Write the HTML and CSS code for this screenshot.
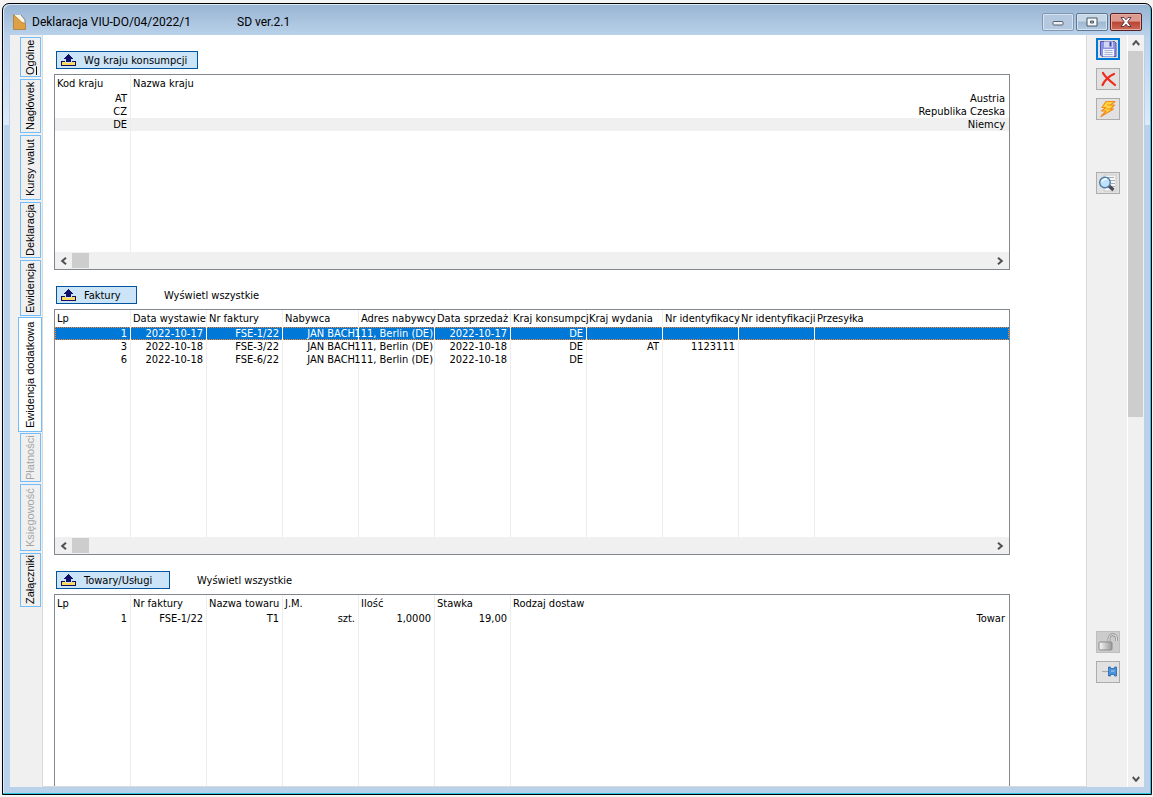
FILE: index.html
```html
<!DOCTYPE html>
<html lang="pl">
<head>
<meta charset="utf-8">
<title>Deklaracja VIU-DO/04/2022/1</title>
<link rel="stylesheet" href="styles.css">
</head>
<body>
<svg class="defs" aria-hidden="true">
  <symbol id="collapse" viewBox="0 0 16 12">
    <path d="M1 8h4v1h5V8h4v3H1z" fill="#ffd95a"/>
    <path d="M0 7h4v1H1v3h13V8h-3V7h4v5H0z" fill="#10106a"/>
    <path d="M7 0h1v1h1v1h1v1h1v1h1v1h-2v3H5V5H3V4h1V3h1V2h1V1h1z" fill="#10106a"/>
  </symbol>
  <symbol id="chevron" viewBox="0 0 8 8">
    <path d="M6 0.800L2.200 4 6 7.200" fill="none" stroke="#505050" stroke-width="2"/>
  </symbol>
</svg>
<div class="window">
  <header class="titlebar">
    <svg class="titlebar__icon" viewBox="0 0 13 16" aria-hidden="true">
      <path d="M1 1h7l4 5v9H1z" fill="#fff6e0"/>
      <path d="M0.500 0.500L9 8.500l3.500 1V15.500H0.500z" fill="#dfa044" stroke="#a8752c" stroke-width=".7"/>
      <path d="M8 1l4 5v3" fill="none" stroke="#6d6d7c" stroke-width=".8"/>
    </svg>
    <h1 class="titlebar__title">Deklaracja VIU-DO/04/2022/1</h1>
    <span class="titlebar__version">SD ver.2.1</span>
    <div class="titlebar__buttons">
      <button class="winbtn winbtn--min" aria-label="Minimalizuj"><svg viewBox="0 0 12 10"><rect x="1" y="4.500" width="10" height="3.500" rx=".8" fill="#eef2f6" stroke="#53606e"/></svg></button>
      <button class="winbtn" aria-label="Maksymalizuj"><svg viewBox="0 0 12 10"><path fill-rule="evenodd" d="M1 1h10v8H1zM4.500 4h3v2h-3z" fill="#f6f8fa" stroke="#48545f"/></svg></button>
      <button class="winbtn winbtn--close" aria-label="Zamknij"><svg viewBox="0 0 12 10"><path d="M1 .5h3L6 2.800 8 .5h3L7.700 5 11 9.500H8L6 7.200 4 9.500H1L4.300 5z" fill="#fff" stroke="#4d3038" stroke-width=".9"/></svg></button>
    </div>
  </header>
  <div class="client">
    <nav class="tabs" role="tablist" aria-label="Zakładki">
      <button class="tab tab--40" role="tab"><u>O</u>gólne</button>
      <button class="tab tab--54" role="tab">Nagłówek</button>
      <button class="tab tab--65" role="tab">Kursy walut</button>
      <button class="tab tab--56" role="tab">Deklaracja</button>
      <button class="tab tab--56" role="tab">Ewidencja</button>
      <button class="tab tab--active" role="tab" aria-selected="true">Ewidencja dodatkowa</button>
      <button class="tab tab--49" role="tab" disabled>Płatności</button>
      <button class="tab tab--67" role="tab" disabled>Księgowość</button>
      <button class="tab tab--54" role="tab">Załączniki</button>
    </nav>
    <main class="main">
      <section class="section">
        <div class="section__bar">
          <button class="group group--wide"><svg><use href="#collapse"/></svg>Wg kraju konsumpcji</button>
        </div>
        <div class="list">
          <table class="grid">
            <colgroup><col class="col"><col></colgroup>
            <thead><tr><th>Kod kraju</th><th>Nazwa kraju</th></tr></thead>
            <tbody>
              <tr><td>AT</td><td>Austria</td></tr>
              <tr><td>CZ</td><td>Republika Czeska</td></tr>
              <tr class="row--shaded"><td>DE</td><td>Niemcy</td></tr>
              <tr class="filler filler--short"><td></td><td></td></tr>
            </tbody>
          </table>
          <div class="hscroll">
            <button aria-label="W lewo"><svg><use href="#chevron"/></svg></button><span class="hscroll__thumb"></span>
            <button class="flip" aria-label="W prawo"><svg><use href="#chevron"/></svg></button>
          </div>
        </div>
      </section>

      <section class="section">
        <div class="section__bar">
          <button class="group group--narrow"><svg><use href="#collapse"/></svg>Faktury</button>
          <span>Wyświetl wszystkie</span>
        </div>
        <div class="list">
          <table class="grid">
            <colgroup><col class="col" span="10"><col></colgroup>
            <thead><tr><th>Lp</th><th>Data wystawie</th><th>Nr faktury</th><th>Nabywca</th><th>Adres nabywcy</th><th>Data sprzedaż</th><th>Kraj konsumpcj</th><th>Kraj wydania</th><th>Nr identyfikacy</th><th>Nr identyfikacji</th><th>Przesyłka</th></tr></thead>
            <tbody>
              <tr class="row--selected"><td>1</td><td>2022-10-17</td><td>FSE-1/22</td><td>JAN BACH</td><td class="spill"><div>111, Berlin (DE)</div></td><td>2022-10-17</td><td>DE</td><td></td><td></td><td></td><td></td></tr>
              <tr><td>3</td><td>2022-10-18</td><td>FSE-3/22</td><td>JAN BACH</td><td class="spill"><div>111, Berlin (DE)</div></td><td>2022-10-18</td><td>DE</td><td>AT</td><td>1123111</td><td></td><td></td></tr>
              <tr><td>6</td><td>2022-10-18</td><td>FSE-6/22</td><td>JAN BACH</td><td class="spill"><div>111, Berlin (DE)</div></td><td>2022-10-18</td><td>DE</td><td></td><td></td><td></td><td></td></tr>
              <tr class="filler filler--tall"><td></td><td></td><td></td><td></td><td></td><td></td><td></td><td></td><td></td><td></td><td></td></tr>
            </tbody>
          </table>
          <div class="hscroll">
            <button aria-label="W lewo"><svg><use href="#chevron"/></svg></button><span class="hscroll__thumb"></span>
            <button class="flip" aria-label="W prawo"><svg><use href="#chevron"/></svg></button>
          </div>
        </div>
      </section>

      <section class="section section--last">
        <div class="section__bar">
          <button class="group group--mid"><svg><use href="#collapse"/></svg>Towary/Usługi</button>
          <span>Wyświetl wszystkie</span>
        </div>
        <div class="list list--open">
          <table class="grid">
            <colgroup><col class="col" span="6"><col></colgroup>
            <thead><tr><th>Lp</th><th>Nr faktury</th><th>Nazwa towaru</th><th>J.M.</th><th>Ilość</th><th>Stawka</th><th>Rodzaj dostaw</th></tr></thead>
            <tbody>
              <tr><td>1</td><td>FSE-1/22</td><td>T1</td><td>szt.</td><td>1,0000</td><td>19,00</td><td>Towar</td></tr>
              <tr class="filler"><td></td><td></td><td></td><td></td><td></td><td></td><td></td></tr>
            </tbody>
          </table>
        </div>
      </section>
    </main>
    <aside class="tools">
      <button class="tool tool--focus" aria-label="Zapisz"><svg viewBox="0 0 20 18">
        <path d="M2.500 1.500h14l1.500 1.500v13.500H4l-1.500-1.500z" fill="#8b93e2" stroke="#5058b4"/>
        <rect x="6" y="1.500" width="9" height="6" fill="#d3d7f5"/><rect x="11.500" y="2" width="2" height="4.500" fill="#4349a0"/>
        <rect x="5" y="9" width="11" height="7.500" fill="#f0f3fb"/><path d="M6.500 10.500h8M6.500 12.500h8M6.500 14.500h8" stroke="#a9b3cc"/></svg></button>
      <button class="tool" aria-label="Anuluj"><svg viewBox="0 0 20 18">
        <path d="M5 3c2 4 7 8 12 12M16 4C11 6 6 11 4.500 15" fill="none" stroke="#ef2b1c" stroke-width="2.200" stroke-linecap="round"/></svg></button>
      <button class="tool tool--bolt" aria-label="Przelicz"><svg viewBox="0 0 20 18">
        <path d="M8 1.500h9L12.500 5h4l-4 4h3L3 16.500 8 11H3.500l4.500-3.500H4z" fill="#ffd640" stroke="#f28c1e" stroke-width="1.200" stroke-linejoin="round"/>
        <path d="M12.500 5H9M12.500 9H8.500" stroke="#f28c1e"/></svg></button>
      <button class="tool" aria-label="Podgląd"><svg viewBox="0 0 20 18">
        <path d="M6 1h12v16H6z" fill="#f6f6f6" stroke="#c8c8c8"/><path d="M8 3.500h8M11 6.500h6M13 9.500h4M12 12.500h5" stroke="#a9adb2"/>
        <path d="M11 12l4.500 4" stroke="#4a4a50" stroke-width="3.400"/>
        <circle cx="7" cy="8.500" r="5.300" fill="#bfe2f8" stroke="#4a7cab" stroke-width="1.400"/><path d="M4 8c.3-2 2.500-3.500 5-3" fill="none" stroke="#fff" stroke-width="1.500"/></svg></button>
      <span class="tools__gap"></span>
      <button class="tool tool--off" aria-label="Odblokuj" disabled><svg viewBox="0 0 20 18">
        <defs><linearGradient id="metal"><stop offset="0" stop-color="#f8f8f8"/><stop offset="1" stop-color="#989898"/></linearGradient></defs>
        <path d="M11 9V5.500c0-5 7.500-5 7.500 0V8" fill="none" stroke="#959595" stroke-width="2.800"/>
        <path d="M11 9V5.500c0-5 7.500-5 7.500 0V8" fill="none" stroke="#dedede" stroke-width="1.200"/>
        <rect x="1" y="9" width="13" height="8" rx="1" fill="url(#metal)" stroke="#8b8b8b"/></svg></button>
      <button class="tool" aria-label="Przypnij"><svg viewBox="0 0 20 18">
        <path d="M4 8.500h7" stroke="#aaa" stroke-width="1.200"/>
        <path d="M10.500 4h2v1.500h4V4h2v9h-2v-1.500h-4V13h-2z" fill="#4b94dc" stroke="#2465a8" stroke-width=".8"/><path d="M13 8h3.500" stroke="#a8d2f7"/></svg></button>
    </aside>
    <div class="vscroll">
      <button class="up" aria-label="W górę"><svg><use href="#chevron"/></svg></button>
      <span class="vscroll__thumb"></span>
      <button class="down" aria-label="W dół"><svg><use href="#chevron"/></svg></button>
    </div>
  </div>
</div>
</body>
</html>
```
FILE: styles.css
```css
* { box-sizing: border-box; }

body {
  margin: 0;
  height: 100vh;
  padding: 3px 1px 2px 2px;
  background: #f4f4f4;
  color: #000;
  font: 11px/13px "DejaVu Sans Condensed", "Noto Sans", sans-serif;
  display: flex;
}

button {
  margin: 0;
  padding: 0;
  font: inherit;
  color: inherit;
  background: none;
  border: 0;
}

.defs { position: absolute; width: 0; height: 0; }

.window {
  flex: 1;
  min-width: 0;
  display: flex;
  flex-direction: column;
  padding: 0 7px 7px;
  border: 1px solid #000;
  border-radius: 7px 7px 0 0;
  box-shadow: inset -1px -1px #2cc4e4, inset 1px 1px #dcebf8;
  background:
    linear-gradient(#b9d1ea00, #dceafa) 1px 30px / 5px 91px no-repeat,
    linear-gradient(#b9d1ea00, #dceafa) right 1px top 30px / 5px 91px no-repeat,
    linear-gradient(#98b4d2, #b9d1ea 31px, #b9d1ea);
}

.titlebar {
  flex: none;
  height: 31px;
  display: flex;
  align-items: center;
  padding: 4px 2px 0 3px;
  font: 12px/16px Roboto, sans-serif;
}

.titlebar__icon { width: 13px; height: 16px; margin-right: 6px; }
.titlebar__title { min-width: 205px; margin: 0; font: inherit; }
.titlebar__buttons { display: flex; gap: 2px; margin-left: auto; }

.winbtn {
  width: 32px;
  height: 18px;
  display: grid;
  place-items: center;
  border: 1px solid #5f7790;
  border-radius: 2px;
  background: linear-gradient(#c6d7e8 45%, #9db7d1 50%, #b4cbe2);
  box-shadow: inset 0 0 0 1px #d6e4f2;
}
.winbtn svg { width: 12px; height: 10px; }
.winbtn--min { border-color: #8298b2; background: #b4c9e0; }
.winbtn--close {
  border-color: #5b1f22;
  background: linear-gradient(#dc9a90 45%, #bb4434 50%, #cb6a55);
  box-shadow: inset 0 0 0 1px #e2aca4;
}

.client { flex: 1; min-height: 0; display: flex; background: #f0f0f0; }

.tabs {
  flex: none;
  width: 33px;
  display: flex;
  flex-direction: column;
  align-items: flex-end;
  gap: 2px;
  padding: 2px 1px 0 0;
  border-right: 1px solid #d9d9d9;
}

.tab {
  width: 21px;
  flex: none;
  writing-mode: vertical-rl;
  transform: rotate(180deg);
  border: 1px solid #74bdfb;
  font: 11px/19px "Liberation Sans", sans-serif;
  text-align: center;
  white-space: nowrap;
}
.tab:disabled { color: #a5a5a5; }
.tab--40 { height: 40px; }
.tab--49 { height: 49px; }
.tab--54 { height: 54px; }
.tab--56 { height: 56px; }
.tab--65 { height: 65px; }
.tab--67 { height: 67px; }
.tab--active {
  width: 24px;
  height: 115px;
  margin: -1px -1px -1px 0;
  background: #fff;
}

.main {
  flex: 1;
  min-width: 0;
  display: flex;
  flex-direction: column;
  gap: 16px;
  padding: 16px 76px 0 11px;
  background: #fff;
  border-bottom: 1px solid #d9d9d9;
  overflow: hidden;
}

.section { flex: none; }
.section--last { flex: 1; min-height: 0; display: flex; flex-direction: column; margin-bottom: -1px; }

.section__bar {
  display: flex;
  align-items: center;
  gap: 27px;
  height: 18px;
  margin: 0 0 5px 2px;
}

.group {
  height: 18px;
  display: flex;
  align-items: center;
  gap: 7px;
  padding-left: 4px;
  border: 1px solid #00549c;
  background: #cce4f7;
  white-space: nowrap;
}
.group svg { width: 16px; height: 12px; }
.group--wide { width: 142px; }
.group--narrow { width: 81px; }
.group--mid { width: 114px; }

.list { border: 1px solid #828790; }
.list--open { flex: 1; min-height: 0; border-bottom: 0; }
.list--open .grid { height: 100%; }

.grid {
  width: 100%;
  table-layout: fixed;
  border-collapse: separate;
  border-spacing: 0;
}
.col { width: 76px; }

.grid th,
.grid td {
  height: 13px;
  padding: 0 3px 0 2px;
  border-right: 1px solid #ededed;
  font-weight: normal;
  text-align: right;
  white-space: nowrap;
}
.grid th { height: 17px; padding-right: 0; text-align: left; }
.grid th:last-child,
.grid td:last-child { border-right: 0; padding-right: 4px; }
.grid .spill { padding: 0 1px 0 0; }
.spill div { display: flex; justify-content: flex-end; }

.row--shaded { background: #f0f0f0; }
.row--selected {
  color: #fff;
  background:
    repeating-linear-gradient(90deg, #ff8728 0 1px, #0078d7 1px 2px) top / 100% 1px no-repeat,
    repeating-linear-gradient(90deg, #ff8728 0 1px, #0078d7 1px 2px) bottom / 100% 1px no-repeat,
    repeating-linear-gradient(#ff8728 0 1px, #0078d7 1px 2px) left / 1px 100% no-repeat,
    repeating-linear-gradient(#ff8728 0 1px, #0078d7 1px 2px) right / 1px 100% no-repeat,
    #0078d7;
}
.row--selected td { border-right-color: #fff; }

.grid .filler td { height: auto; }
.grid .filler--short td { height: 121px; }
.grid .filler--tall td { height: 171px; }

.hscroll {
  display: flex;
  align-items: center;
  height: 17px;
  background: #f0f0f0;
}
.hscroll button { width: 17px; height: 17px; display: grid; place-items: center; }
.hscroll svg,
.vscroll svg { width: 8px; height: 8px; }
.hscroll__thumb { width: 17px; height: 15px; background: #cdcdcd; }
.hscroll .flip { margin-left: auto; transform: scaleX(-1); }

.tools {
  flex: none;
  width: 42px;
  display: flex;
  flex-direction: column;
  align-items: flex-start;
  gap: 8px;
  padding: 3px 0 104px 9px;
  border-left: 1px solid #d9d9d9;
  border-right: 1px solid #fff;
}
.tool {
  width: 24px;
  height: 22px;
  display: grid;
  place-items: center;
  border: 1px solid #adadad;
  background: #e1e1e1;
}
.tool svg { width: 20px; height: 18px; }
.tool--focus { border: 2px solid #0078d7; }
.tool--bolt { margin-bottom: 44px; }
.tool--off { background: #ccc; border-color: #bfbfbf; }
.tools__gap { flex: 1; }

.vscroll {
  flex: none;
  width: 16px;
  display: flex;
  flex-direction: column;
}
.vscroll button { height: 16px; width: 16px; display: grid; place-items: center; }
.vscroll__thumb { width: 15px; height: 366px; background: #cdcdcd; }
.vscroll .up { transform: rotate(90deg); }
.vscroll .down { transform: rotate(-90deg); margin-top: auto; }
```
